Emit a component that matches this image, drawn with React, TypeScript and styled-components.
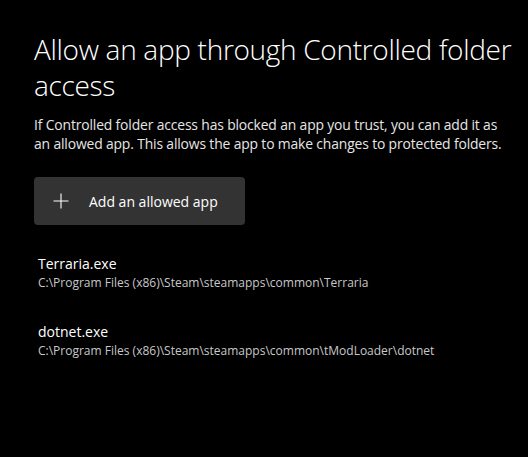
import React from 'react';
import styled, {createGlobalStyle} from 'styled-components';

const GlobalStyle = createGlobalStyle`
  html, body {
    margin: 0;
    background: #000;
  }
  body {
    font-family: 'Open Sans', 'Noto Sans', sans-serif;
    color: #fff;
  }
`;

const Page = styled.div`
  width: 528px;
  height: 457px;
  box-sizing: border-box;
  padding: 31px 0 0 34px;
  background: #000;
  overflow: hidden;
`;

const Title = styled.h1`
  margin: 0;
  font-size: 28px;
  font-weight: 300;
  line-height: 36px;
  color: #fff;
  letter-spacing: -0.3px;
`;

const Description = styled.p`
  margin: 12px 0 0;
  font-size: 13.9px;
  line-height: 19px;
  letter-spacing: -0.15px;
  color: #e6e6e6;
  white-space: nowrap;
`;

const AddButton = styled.button`
  margin-top: 24px;
  display: flex;
  align-items: center;
  gap: 20px;
  width: 211px;
  height: 48px;
  padding: 0 0 0 19px;
  border: none;
  border-radius: 4px;
  background: #333;
  color: #fff;
  font-family: inherit;
  font-size: 14px;
  cursor: pointer;
`;

const AppList = styled.ul`
  list-style: none;
  margin: 29px 0 0;
  padding: 0 0 0 4px;
  display: flex;
  flex-direction: column;
  gap: 31px;
`;

const AppItem = styled.li`
  display: flex;
  flex-direction: column;
  gap: 2px;
`;

const AppName = styled.span`
  font-size: 14px;
  line-height: 19px;
  color: #fff;
`;

const AppPath = styled.span`
  font-size: 12px;
  line-height: 16px;
  color: #c8c8c8;
`;

const apps = [
  {name: 'Terraria.exe', path: 'C:\\Program Files (x86)\\Steam\\steamapps\\common\\Terraria'},
  {name: 'dotnet.exe', path: 'C:\\Program Files (x86)\\Steam\\steamapps\\common\\tModLoader\\dotnet'},
];

const PlusIcon = () => (
  <svg width="16" height="16" viewBox="0 0 16 16" fill="none">
    <path d="M8 0.5v15M0.5 8h15" stroke="#fff" strokeWidth="1.1" />
  </svg>
);

const App: React.FC = () => {
  return (
    <Page>
      <GlobalStyle />
      <Title>Allow an app through Controlled folder access</Title>
      <Description>
        If Controlled folder access has blocked an app you trust, you can add it as
        <br />
        an allowed app. This allows the app to make changes to protected folders.
      </Description>
      <AddButton>
        <PlusIcon />
        Add an allowed app
      </AddButton>
      <AppList>
        {apps.map(app => (
          <AppItem key={app.name}>
            <AppName>{app.name}</AppName>
            <AppPath>{app.path}</AppPath>
          </AppItem>
        ))}
      </AppList>
    </Page>
  );
};

export default App;
